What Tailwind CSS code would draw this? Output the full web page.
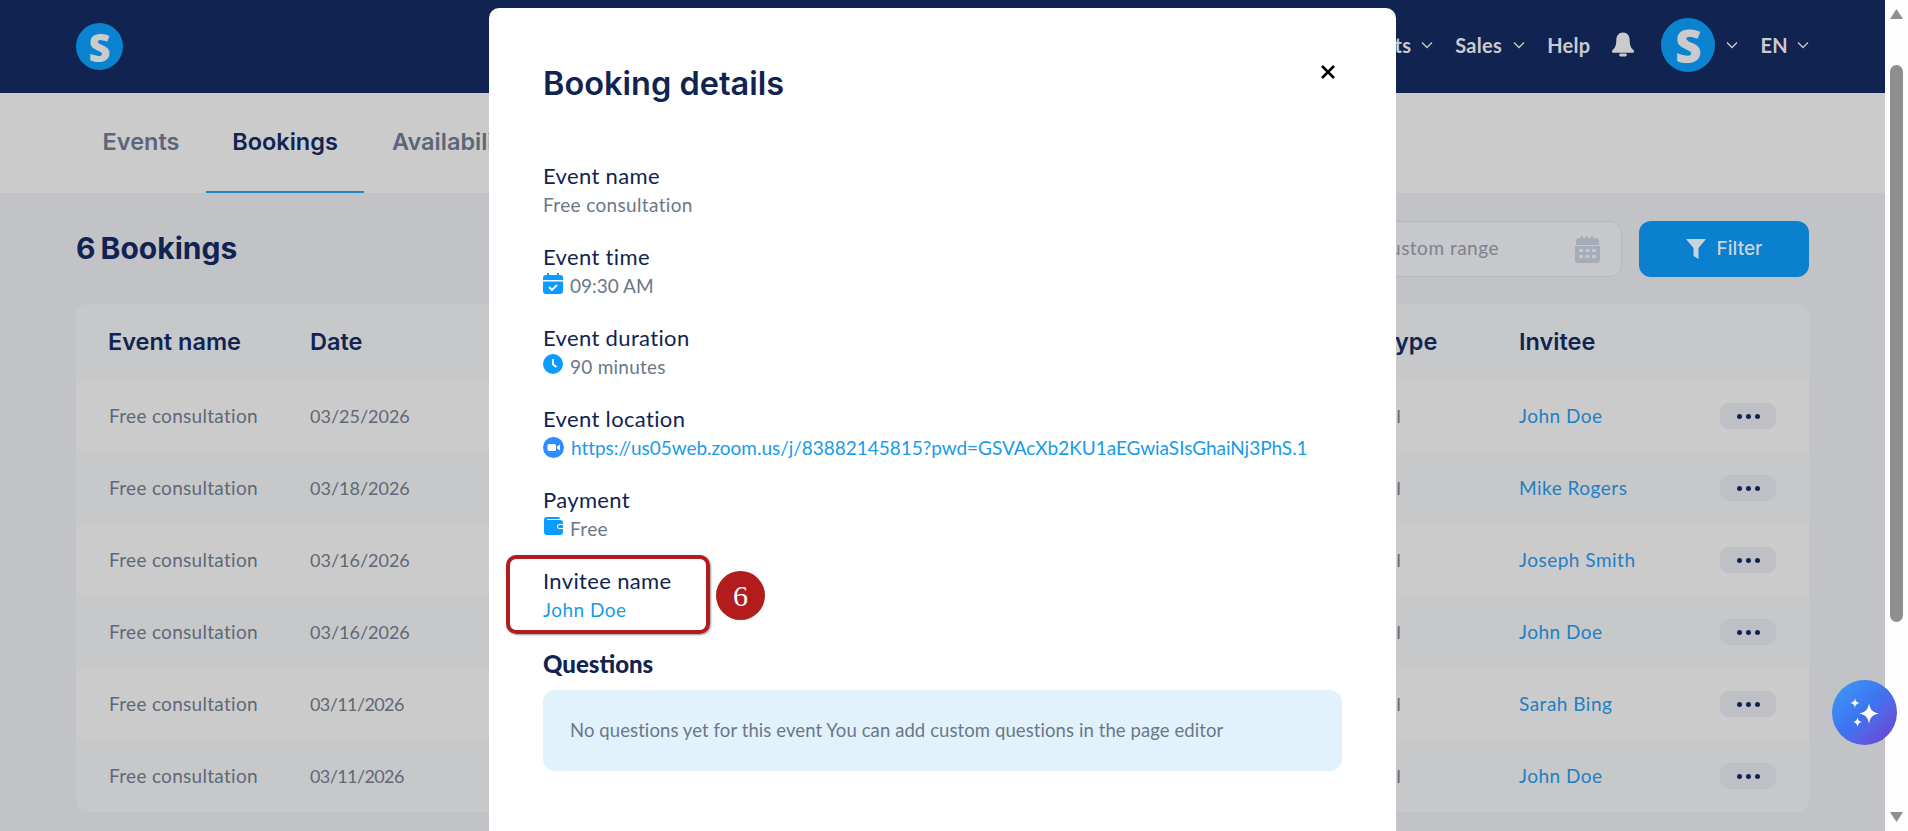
<!DOCTYPE html>
<html lang="en">
<head>
<meta charset="utf-8">
<title>Booking details</title>
<script src="https://cdn.jsdelivr.net/npm/@tailwindcss/browser@4"></script>
</head>
<body class="overflow-hidden">
<div class="relative flex h-[831px] w-[1908px] overflow-hidden bg-[#c2c3c7] font-['Lato',sans-serif] text-[#112451]">
  <main class="flex h-[831px] w-[1885px] flex-col">
    <header class="flex h-[93px] shrink-0 items-center justify-between bg-[#112451] pl-[76px] pr-[76px]">
      <div class="flex h-[47px] w-[47px] items-center justify-center rounded-full bg-[#0a84d0] font-['Open_Sans',sans-serif] text-[38px] font-extrabold leading-none text-[#cbcbcc]">S</div>
      <nav class="flex items-center pb-[4px] text-[20px] font-bold tracking-[0.3px] text-[#cbcbcc]">
        <span>Products</span>
        <svg class="ml-[10px] h-[8px] w-[12px]" viewBox="0 0 12 8" fill="none" stroke="#cbcbcc" stroke-width="1.3"><path d="M1 1.5l5 5 5-5"/></svg>
        <span class="ml-[22px]">Sales</span>
        <svg class="ml-[11px] h-[8px] w-[12px]" viewBox="0 0 12 8" fill="none" stroke="#cbcbcc" stroke-width="1.3"><path d="M1 1.5l5 5 5-5"/></svg>
        <span class="ml-[22px]">Help</span>
        <svg class="ml-[22px] h-[25px] w-[22px]" viewBox="0 0 23 25" fill="#cbcbcc"><path d="M11.5 0C7 0 4.500 3.500 4.500 8c0 5-1 7.500-3 9.500-.8.800-1.500 1.500-1.500 2.200 0 .8.700 1.300 1.500 1.300h20c.8 0 1.500-.5 1.500-1.300 0-.7-.7-1.400-1.500-2.200-2-2-3-4.500-3-9.500 0-4.500-2.500-8-7-8z"/><rect x="7.500" y="22" width="8" height="3" rx="1.500"/></svg>
        <div class="ml-[27px] flex h-[54px] w-[54px] items-center justify-center rounded-full bg-[#0a84d0] font-['Open_Sans',sans-serif] text-[46px] font-extrabold leading-none">S</div>
        <svg class="ml-[11px] h-[8px] w-[12px]" viewBox="0 0 12 8" fill="none" stroke="#cbcbcc" stroke-width="1.3"><path d="M1 1.5l5 5 5-5"/></svg>
        <span class="ml-[22px]">EN</span>
        <svg class="ml-[9px] h-[8px] w-[12px]" viewBox="0 0 12 8" fill="none" stroke="#cbcbcc" stroke-width="1.3"><path d="M1 1.5l5 5 5-5"/></svg>
      </nav>
    </header>

    <div class="flex h-[100px] shrink-0 bg-[#cbcbcc] pl-[75px] font-['Inter',sans-serif] text-[23.500px] font-semibold">
      <div class="flex w-[131px] items-center justify-center pb-[3px] pl-[1px] text-[#5b6679]">Events</div>
      <div class="flex w-[158px] items-center justify-center border-b-[2px] border-[#2085c5] pb-[1px]">Bookings</div>
      <div class="flex items-center pb-[3px] pl-[28px] text-[#5b6679]">Availability</div>
    </div>

    <div class="flex items-center justify-between pl-[76px] pr-[76px] pt-[28px]">
      <h2 class="pb-[1px] font-['Inter',sans-serif] text-[30px] font-bold [word-spacing:-2px]">6 Bookings</h2>
      <div class="flex gap-[17px]">
        <div class="flex h-[56px] w-[300px] items-center justify-between rounded-[12px] border border-[#b5b8bd] bg-[#c7c8cb] pl-[54px] pr-[20px] text-[19px] tracking-[0.5px] text-[#7d838e]">
          <span class="pb-[2px]">Custom range</span>
          <svg class="h-[27px] w-[27px]" viewBox="0 0 27 27" fill="#a6adb8"><path d="M2 5a3 3 0 0 1 3-3h2V0h2v2h3V0h2v2h3V0h2v2h3a3 3 0 0 1 3 3v4H2z"/><path fill-rule="evenodd" d="M1 10h25v14a3 3 0 0 1-3 3H4a3 3 0 0 1-3-3zm4 3v3h4v-3zm6.500 0v3h4v-3zm6.500 0v3h4v-3zM5 19v3h4v-3zm6.500 0v3h4v-3zm6.500 0v3h4v-3z"/></svg>
        </div>
        <button class="flex h-[56px] w-[170px] items-center justify-center gap-[11px] rounded-[12px] bg-[#0a80cf] font-['Inter',sans-serif] text-[19px] font-medium text-[#c9d3db]">
          <svg class="h-[20px] w-[20px]" viewBox="0 0 20 20" fill="#c9d3db"><path d="M0 0h20l-7.500 9v11l-5-3V9z"/></svg>
          Filter
        </button>
      </div>
    </div>

    <section class="mx-[76px] mt-[27px] overflow-hidden rounded-[12px] bg-[#c7c8ca]">
      <div class="grid h-[76px] grid-cols-[202px_1038px_171px_201px_56px] items-center pl-[32px] font-['Inter',sans-serif] text-[23.500px] font-semibold">
        <span>Event name</span><span>Date</span><span class="pl-[33px]">Type</span><span>Invitee</span><span></span>
      </div>
      <div class="grid h-[72px] grid-cols-[202px_1038px_171px_201px_56px] items-center bg-[#cbcbcc] pl-[32px] text-[19px] tracking-[0.3px] text-[#5f6876]">
        <span class="pl-[1px]">Free consultation</span><span class="text-[18px] tracking-normal">03/25/2026</span><span class="text-[18px] tracking-normal">Virtual</span><span class="tracking-[0.5px] text-[#1f7fc4]">John Doe</span>
        <span class="flex h-[26px] items-center justify-center gap-[4px] rounded-[9px] bg-[#bec0c5]"><i class="h-[5px] w-[5px] rounded-full bg-[#112451]"></i><i class="h-[5px] w-[5px] rounded-full bg-[#112451]"></i><i class="h-[5px] w-[5px] rounded-full bg-[#112451]"></i></span>
      </div>
      <div class="grid h-[72px] grid-cols-[202px_1038px_171px_201px_56px] items-center pl-[32px] text-[19px] tracking-[0.3px] text-[#5f6876]">
        <span class="pl-[1px]">Free consultation</span><span class="text-[18px] tracking-normal">03/18/2026</span><span class="text-[18px] tracking-normal">Virtual</span><span class="tracking-[0.5px] text-[#1f7fc4]">Mike Rogers</span>
        <span class="flex h-[26px] items-center justify-center gap-[4px] rounded-[9px] bg-[#bec0c5]"><i class="h-[5px] w-[5px] rounded-full bg-[#112451]"></i><i class="h-[5px] w-[5px] rounded-full bg-[#112451]"></i><i class="h-[5px] w-[5px] rounded-full bg-[#112451]"></i></span>
      </div>
      <div class="grid h-[72px] grid-cols-[202px_1038px_171px_201px_56px] items-center bg-[#cbcbcc] pl-[32px] text-[19px] tracking-[0.3px] text-[#5f6876]">
        <span class="pl-[1px]">Free consultation</span><span class="text-[18px] tracking-normal">03/16/2026</span><span class="text-[18px] tracking-normal">Virtual</span><span class="tracking-[0.5px] text-[#1f7fc4]">Joseph Smith</span>
        <span class="flex h-[26px] items-center justify-center gap-[4px] rounded-[9px] bg-[#bec0c5]"><i class="h-[5px] w-[5px] rounded-full bg-[#112451]"></i><i class="h-[5px] w-[5px] rounded-full bg-[#112451]"></i><i class="h-[5px] w-[5px] rounded-full bg-[#112451]"></i></span>
      </div>
      <div class="grid h-[72px] grid-cols-[202px_1038px_171px_201px_56px] items-center pl-[32px] text-[19px] tracking-[0.3px] text-[#5f6876]">
        <span class="pl-[1px]">Free consultation</span><span class="text-[18px] tracking-normal">03/16/2026</span><span class="text-[18px] tracking-normal">Virtual</span><span class="tracking-[0.5px] text-[#1f7fc4]">John Doe</span>
        <span class="flex h-[26px] items-center justify-center gap-[4px] rounded-[9px] bg-[#bec0c5]"><i class="h-[5px] w-[5px] rounded-full bg-[#112451]"></i><i class="h-[5px] w-[5px] rounded-full bg-[#112451]"></i><i class="h-[5px] w-[5px] rounded-full bg-[#112451]"></i></span>
      </div>
      <div class="grid h-[72px] grid-cols-[202px_1038px_171px_201px_56px] items-center bg-[#cbcbcc] pl-[32px] text-[19px] tracking-[0.3px] text-[#5f6876]">
        <span class="pl-[1px]">Free consultation</span><span class="text-[18px] tracking-[-0.6px]">03/11/2026</span><span class="text-[18px] tracking-normal">Virtual</span><span class="tracking-[0.5px] text-[#1f7fc4]">Sarah Bing</span>
        <span class="flex h-[26px] items-center justify-center gap-[4px] rounded-[9px] bg-[#bec0c5]"><i class="h-[5px] w-[5px] rounded-full bg-[#112451]"></i><i class="h-[5px] w-[5px] rounded-full bg-[#112451]"></i><i class="h-[5px] w-[5px] rounded-full bg-[#112451]"></i></span>
      </div>
      <div class="grid h-[72px] grid-cols-[202px_1038px_171px_201px_56px] items-center pl-[32px] text-[19px] tracking-[0.3px] text-[#5f6876]">
        <span class="pl-[1px]">Free consultation</span><span class="text-[18px] tracking-[-0.6px]">03/11/2026</span><span class="text-[18px] tracking-normal">Virtual</span><span class="tracking-[0.5px] text-[#1f7fc4]">John Doe</span>
        <span class="flex h-[26px] items-center justify-center gap-[4px] rounded-[9px] bg-[#bec0c5]"><i class="h-[5px] w-[5px] rounded-full bg-[#112451]"></i><i class="h-[5px] w-[5px] rounded-full bg-[#112451]"></i><i class="h-[5px] w-[5px] rounded-full bg-[#112451]"></i></span>
      </div>
    </section>
  </main>

  <aside class="relative h-[831px] w-[23px] bg-[#fdfdfd]">
    <svg class="absolute left-[5px] top-[9px] h-[10px] w-[13px]" viewBox="0 0 13 10" fill="#8f8f8f"><path d="M6.500 0L13 10H0z"/></svg>
    <div class="absolute left-[5px] top-[65px] h-[557px] w-[13px] rounded-[7px] bg-[#8f8f8f]"></div>
    <svg class="absolute bottom-[9px] left-[5px] h-[10px] w-[13px]" viewBox="0 0 13 10" fill="#8f8f8f"><path d="M0 0h13L6.500 10z"/></svg>
  </aside>

  <div class="absolute left-[489px] top-[8px] h-[840px] w-[907px] rounded-[10px] bg-white pl-[54px] pr-[54px] pt-[55px]">
    <div class="mb-[58px] flex h-[40px] items-center justify-between">
      <h1 class="pt-[2px] font-['Inter',sans-serif] text-[32.500px] font-semibold leading-[40px]">Booking details</h1>
      <svg class="mb-[22px] mr-[7px] h-[14px] w-[14px]" viewBox="0 0 14 14" stroke="#000" stroke-width="2.600"><path d="M1 1l12 12M13 1L1 13"/></svg>
    </div>

    <div class="h-[81px]">
      <div class="h-[30px] text-[22px] leading-[30px] tracking-[0.35px]">Event name</div>
      <div class="mt-[1px] h-[26px] text-[19px] leading-[26px] tracking-[0.35px] text-[#6b7787]">Free consultation</div>
    </div>
    <div class="h-[81px]">
      <div class="h-[30px] text-[22px] leading-[30px] tracking-[0.35px]">Event time</div>
      <div class="mt-[1px] flex h-[26px] items-center gap-[7px] text-[19px] leading-[26px] text-[#6b7787]">
        <svg class="mt-[-5px] h-[21px] w-[20px]" viewBox="0 0 20 21" fill="#0a9cff"><path d="M0 5a3 3 0 0 1 3-3h1V0h2v2h8V0h2v2h1a3 3 0 0 1 3 3v2H0z"/><path d="M0 8.500h20V18a3 3 0 0 1-3 3H3a3 3 0 0 1-3-3z"/><path d="M6 14l3 3 5-5" fill="none" stroke="#fff" stroke-width="1.800"/></svg>
        09:30 AM
      </div>
    </div>
    <div class="h-[81px]">
      <div class="h-[30px] text-[22px] leading-[30px] tracking-[0.35px]">Event duration</div>
      <div class="mt-[1px] flex h-[26px] items-center gap-[7px] text-[19px] leading-[26px] tracking-[0.25px] text-[#6b7787]">
        <svg class="mt-[-6px] h-[20px] w-[20px]" viewBox="0 0 20 20"><circle cx="10" cy="10" r="10" fill="#0a9cff"/><path d="M10 5v5.500l3.500 2.500" fill="none" stroke="#fff" stroke-width="1.800"/></svg>
        90 minutes
      </div>
    </div>
    <div class="h-[81px]">
      <div class="h-[30px] text-[22px] leading-[30px] tracking-[0.35px]">Event location</div>
      <div class="mt-[1px] flex h-[26px] items-center gap-[7px] text-[19px] leading-[26px] tracking-[-0.03px] text-[#1a9be8]">
        <svg class="mt-[-2px] h-[21px] w-[21px]" viewBox="0 0 21 21"><circle cx="10.500" cy="10.500" r="10.500" fill="#2d8cff"/><rect x="4.500" y="7" width="8.500" height="7" rx="1.500" fill="#fff"/><path d="M14 9.500l3-2v6l-3-2z" fill="#fff"/></svg>
        https://us05web.zoom.us/j/83882145815?pwd=GSVAcXb2KU1aEGwiaSIsGhaiNj3PhS.1
      </div>
    </div>
    <div class="h-[81px]">
      <div class="h-[30px] text-[22px] leading-[30px] tracking-[0.35px]">Payment</div>
      <div class="mt-[1px] flex h-[26px] items-center gap-[7px] text-[19px] leading-[26px] tracking-[0.35px] text-[#6b7787]">
        <svg class="mt-[-6px] h-[18px] w-[20px]" viewBox="0 0 20 18"><path d="M1 3a3 3 0 0 1 3-3h11a2 2 0 0 1 2 2H4v1h13a3 3 0 0 1 3 3v9a3 3 0 0 1-3 3H4a3 3 0 0 1-3-3z" fill="#0a9cff"/><path d="M20 7h-3.500a2.500 2.500 0 0 0 0 5H20v-1h-3.500a1.500 1.500 0 0 1 0-3H20z" fill="#fff"/></svg>
        Free
      </div>
    </div>
    <div class="h-[83px]">
      <div class="h-[30px] text-[22px] leading-[30px] tracking-[0.35px]">Invitee name</div>
      <div class="mt-[1px] h-[26px] text-[19px] leading-[26px] tracking-[0.5px] text-[#1a9be8]">John Doe</div>
    </div>

    <h3 class="h-[41px] text-[24px] font-black leading-[30px]">Questions</h3>
    <div class="flex h-[81px] w-[799px] items-center rounded-[12px] bg-[#e2f2fd] pl-[27px] pt-[1px] text-[18.500px] tracking-[0.09px] text-[#6b7787]">No questions yet for this event You can add custom questions in the page editor</div>

    <div class="absolute left-[17px] top-[547px] h-[79px] w-[204px] rounded-[10px] border-[4px] border-[#b31c1c] shadow-[1px_1px_2px_rgba(0,0,0,0.4)]"></div>
    <div class="absolute left-[227px] top-[563px] flex h-[49px] w-[49px] items-center justify-center rounded-full bg-[#b31c1c] font-['Liberation_Serif',serif] text-[30px] text-white">6</div>
  </div>

  <div class="absolute left-[1832px] top-[680px] flex h-[65px] w-[65px] items-center justify-center rounded-full bg-linear-to-br from-[#3b9cf5] via-[#3f72f0] to-[#6d3ccc]">
    <svg class="h-[34px] w-[34px]" viewBox="0 0 34 34" fill="#fff"><path d="M21 7c1 6.500 3.500 9.500 10 10.500-6.500 1-9 4-10 10.500-1-6.500-3.500-9.500-10-10.500 6.500-1 9-4 10-10.500z"/><path d="M7 2c.6 3.400 1.600 4.400 5 5-3.400.6-4.400 1.600-5 5-.6-3.400-1.600-4.400-5-5 3.400-.6 4.400-1.600 5-5z"/><path d="M9.500 21c.6 3.400 1.600 4.400 4.500 5-2.900.6-3.900 1.600-4.500 5-.6-3.400-1.600-4.400-4.500-5 2.900-.6 3.900-1.600 4.500-5z"/></svg>
  </div>
</div>
</body>
</html>
